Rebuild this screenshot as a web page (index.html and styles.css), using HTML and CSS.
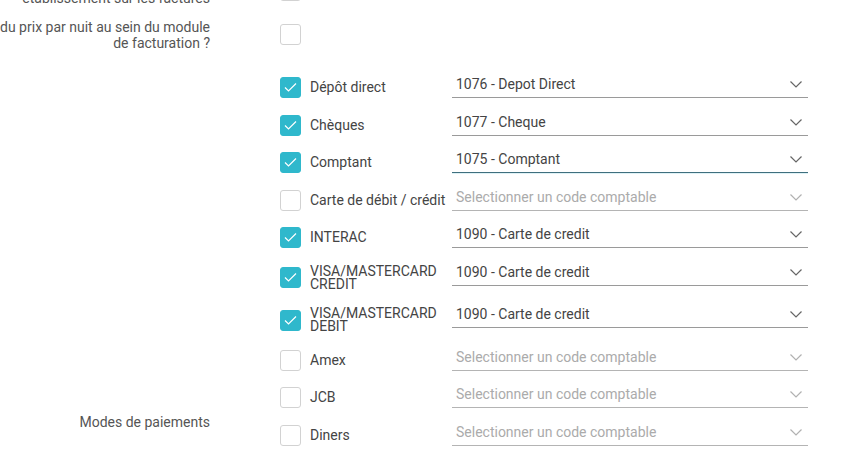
FILE: index.html
```html
<!DOCTYPE html>
<html lang="fr">
<head>
  <meta charset="utf-8">
  <title>Paramètres de facturation</title>
  <link rel="stylesheet" href="styles.css">
</head>
<body>
  <form class="settings">
    <div class="field">
      <div class="field-label">Afficher l'adresse de l'<br>établissement sur les factures</div>
      <div class="field-input"><span class="box"></span></div>
    </div>
    <div class="field">
      <div class="field-label">Afficher le détail du prix par nuit au sein du module<br>de facturation ?</div>
      <div class="field-input"><span class="box"></span></div>
    </div>

    <div class="field field-payments">
      <div class="field-label">Modes de paiements</div>
      <div class="pay-list">
        <div class="pay-row">
          <label class="pay-check"><span class="box checked"></span><span class="pay-name">Dépôt direct</span></label>
          <div class="select"><span class="select-value">1076 - Depot Direct</span><span class="chevron"></span></div>
        </div>
        <div class="pay-row">
          <label class="pay-check"><span class="box checked"></span><span class="pay-name">Chèques</span></label>
          <div class="select"><span class="select-value">1077 - Cheque</span><span class="chevron"></span></div>
        </div>
        <div class="pay-row">
          <label class="pay-check"><span class="box checked"></span><span class="pay-name">Comptant</span></label>
          <div class="select focused"><span class="select-value">1075 - Comptant</span><span class="chevron"></span></div>
        </div>
        <div class="pay-row">
          <label class="pay-check"><span class="box"></span><span class="pay-name">Carte de débit / crédit</span></label>
          <div class="select empty"><span class="select-value">Selectionner un code comptable</span><span class="chevron"></span></div>
        </div>
        <div class="pay-row">
          <label class="pay-check"><span class="box checked"></span><span class="pay-name">INTERAC</span></label>
          <div class="select"><span class="select-value">1090 - Carte de credit</span><span class="chevron"></span></div>
        </div>
        <div class="pay-row">
          <label class="pay-check"><span class="box checked"></span><span class="pay-name">VISA/MASTERCARD CREDIT</span></label>
          <div class="select"><span class="select-value">1090 - Carte de credit</span><span class="chevron"></span></div>
        </div>
        <div class="pay-row">
          <label class="pay-check"><span class="box checked"></span><span class="pay-name">VISA/MASTERCARD DEBIT</span></label>
          <div class="select"><span class="select-value">1090 - Carte de credit</span><span class="chevron"></span></div>
        </div>
        <div class="pay-row">
          <label class="pay-check"><span class="box"></span><span class="pay-name">Amex</span></label>
          <div class="select empty"><span class="select-value">Selectionner un code comptable</span><span class="chevron"></span></div>
        </div>
        <div class="pay-row">
          <label class="pay-check"><span class="box"></span><span class="pay-name">JCB</span></label>
          <div class="select empty"><span class="select-value">Selectionner un code comptable</span><span class="chevron"></span></div>
        </div>
        <div class="pay-row">
          <label class="pay-check"><span class="box"></span><span class="pay-name">Diners</span></label>
          <div class="select empty"><span class="select-value">Selectionner un code comptable</span><span class="chevron"></span></div>
        </div>
        <div class="pay-row">
          <label class="pay-check"><span class="box"></span><span class="pay-name">Discover</span></label>
          <div class="select empty"><span class="select-value">Selectionner un code comptable</span><span class="chevron"></span></div>
        </div>
        <div class="pay-row">
          <label class="pay-check"><span class="box"></span><span class="pay-name">UnionPay</span></label>
          <div class="select empty"><span class="select-value">Selectionner un code comptable</span><span class="chevron"></span></div>
        </div>
        <div class="pay-row">
          <label class="pay-check"><span class="box"></span><span class="pay-name">Virement</span></label>
          <div class="select empty"><span class="select-value">Selectionner un code comptable</span><span class="chevron"></span></div>
        </div>
        <div class="pay-row">
          <label class="pay-check"><span class="box"></span><span class="pay-name">Certificat cadeau</span></label>
          <div class="select empty"><span class="select-value">Selectionner un code comptable</span><span class="chevron"></span></div>
        </div>
        <div class="pay-row">
          <label class="pay-check"><span class="box"></span><span class="pay-name">Compte client</span></label>
          <div class="select empty"><span class="select-value">Selectionner un code comptable</span><span class="chevron"></span></div>
        </div>
        <div class="pay-row">
          <label class="pay-check"><span class="box"></span><span class="pay-name">Bon d'achat</span></label>
          <div class="select empty"><span class="select-value">Selectionner un code comptable</span><span class="chevron"></span></div>
        </div>
        <div class="pay-row">
          <label class="pay-check"><span class="box"></span><span class="pay-name">Crédit client</span></label>
          <div class="select empty"><span class="select-value">Selectionner un code comptable</span><span class="chevron"></span></div>
        </div>
        <div class="pay-row">
          <label class="pay-check"><span class="box"></span><span class="pay-name">Paypal</span></label>
          <div class="select empty"><span class="select-value">Selectionner un code comptable</span><span class="chevron"></span></div>
        </div>
        <div class="pay-row">
          <label class="pay-check"><span class="box"></span><span class="pay-name">Autre</span></label>
          <div class="select empty"><span class="select-value">Selectionner un code comptable</span><span class="chevron"></span></div>
        </div>
      </div>
    </div>
  </form>
</body>
</html>
```

FILE: styles.css
```css
html {
  box-sizing: border-box;
  overflow: hidden;
}

*, *:before, *:after {
  box-sizing: inherit;
}

body {
  margin: 0;
  background: #fff;
  color: #444;
  font-family: Roboto, 'Liberation Sans', sans-serif;
  font-size: 14px;
}

/* the page is scrolled a little, the first row is cut at the top */
.settings {
  margin-top: -26px;
  width: 808px;
}

.field {
  display: grid;
  grid-template-columns: 210px 1fr;
  column-gap: 70px;
}

.field + .field {
  margin-top: 12.5px;
}

/* long labels spill out to the left of their column */
.field-label {
  align-self: center;
  justify-self: end;
  width: max-content;
  text-align: right;
  line-height: 16px;
  color: #555;
}

.field-input {
  display: flex;
  align-items: center;
}

.field-payments {
  margin-top: 26.5px !important;
}

.field-payments .field-label {
  padding-bottom: 16px;
}

.box {
  flex: none;
  display: inline-block;
  width: 21px;
  height: 21px;
  border: 1px solid #d2d2d2;
  border-radius: 3px;
  background: #fff;
}

.box.checked {
  border-color: #2fb8cc;
  background: #2fb8cc url("data:image/svg+xml,%3Csvg xmlns='http://www.w3.org/2000/svg' width='21' height='21'%3E%3Cpolyline points='5,10.5 8.5,14 16,6.5' fill='none' stroke='%23fff' stroke-width='1.2'/%3E%3C/svg%3E") center / 21px 21px no-repeat;
}

.pay-list {
  display: flex;
  flex-direction: column;
  gap: 16.5px;
}

.pay-row {
  display: flex;
  align-items: flex-start;
}

.pay-check {
  display: flex;
  align-items: center;
  width: 172px;
  min-height: 21px;
}

.pay-name {
  margin-left: 9px;
  line-height: 13px;
  color: #444;
}

.select {
  display: flex;
  align-items: center;
  width: 356px;
  height: 21px;
  padding: 0 6px 6px 4px;
  border-bottom: 1px solid #9a9a9a;
  line-height: 14px;
  color: #444;
}

.select-value {
  flex: 1;
  white-space: nowrap;
}

.select.empty {
  border-bottom-color: #b4b4b4;
  color: #ababab;
}

.select.focused {
  border-bottom-color: #3f6f7e;
  box-shadow: 0 1px 0 #dff2f6;
}

.chevron {
  width: 12px;
  height: 7px;
  margin-top: 1px;
  background: url("data:image/svg+xml,%3Csvg xmlns='http://www.w3.org/2000/svg' width='12' height='7'%3E%3Cpolyline points='0.5,0.5 6,6 11.5,0.5' fill='none' stroke='%23666' stroke-width='1.2'/%3E%3C/svg%3E") no-repeat;
}

.select.empty .chevron {
  opacity: 0.5;
}
```
